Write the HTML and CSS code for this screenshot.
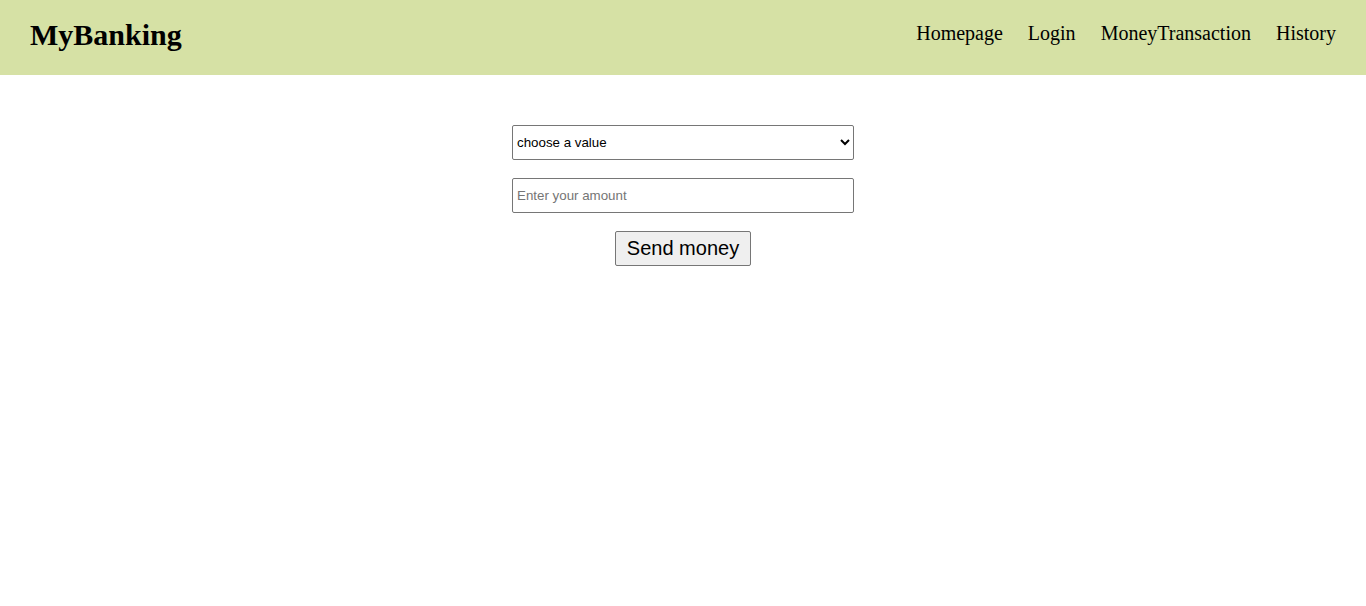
FILE: index.html
```html
<!DOCTYPE html>
<html>
<head>
<meta charset="utf-8">
<link rel="stylesheet" href="styles.css">
</head>
<body>
<header class="topbar">
  <div class="logo">MyBanking</div>
  <nav class="nav">
    <a href="#">Homepage</a>
    <a href="#">Login</a>
    <a href="#">MoneyTransaction</a>
    <a href="#">History</a>
  </nav>
</header>
<main class="content">
  <form class="transfer">
    <select class="field field-select">
      <option>choose a value</option>
    </select>
    <input class="field field-input" type="text" placeholder="Enter your amount">
    <button class="send" type="button">Send money</button>
  </form>
</main>
</body>
</html>
```
FILE: styles.css
```css
html, body {
  margin: 0;
  padding: 0;
  background: #fff;
}
body {
  font-family: "Liberation Serif", "Times New Roman", serif;
}
.topbar {
  height: 75px;
  background: #d6e1a5;
  display: flex;
  align-items: center;
  justify-content: space-between;
  padding: 0 30px 6px;
  box-sizing: border-box;
}
.logo {
  font-size: 30px;
  font-weight: bold;
  color: #000;
}
.nav {
  display: flex;
  gap: 25px;
  padding-bottom: 2px;
}
.nav a {
  color: #000;
  text-decoration: none;
  font-size: 20px;
}
.content {
  padding-top: 50px;
}
.transfer {
  display: flex;
  flex-direction: column;
  align-items: center;
  gap: 18px;
}
.field {
  width: 342px;
  height: 35px;
  box-sizing: border-box;
  border: 1px solid #767676;
  border-radius: 2px;
  background: #fff;
  font-family: "Liberation Sans", Arial, sans-serif;
  font-size: 13.33px;
  color: #000;
  margin: 0;
}
.field-select {
  padding: 1px 0;
}
.field-input {
  padding: 1px 4px;
}
.field::placeholder {
  color: #757575;
}
.send {
  width: 136px;
  height: 35px;
  box-sizing: border-box;
  font-family: "Liberation Sans", Arial, sans-serif;
  font-size: 20px;
  color: #000;
  background: #efefef;
  border: 1px solid #767676;
  border-radius: 2px;
  padding: 0;
  margin: 0;
}
```
